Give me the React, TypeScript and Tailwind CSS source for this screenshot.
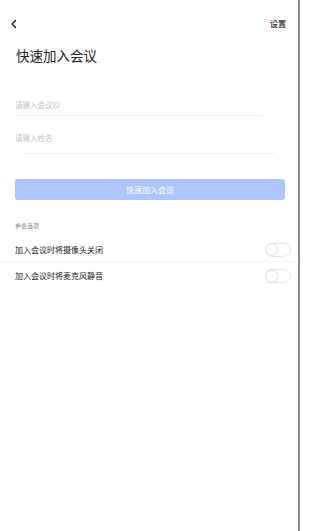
const font = {
  fontFamily:
    '"Noto Sans CJK SC", "Noto Sans", "Liberation Sans", sans-serif',
};

function Toggle() {
  return (
    <div className="w-[26px] h-[14px] rounded-full border border-[#e6e6e6] bg-white flex items-center">
      <div className="w-[13px] h-[13px] rounded-full border border-[#dcdcdc] bg-white -ml-px" />
    </div>
  );
}

export default function App() {
  return (
    <div
      className="w-[300px] h-[531px] bg-white border-r-2 border-[#8a8a8a] overflow-hidden"
      style={font}
    >
      <div className="flex items-center justify-between pl-[10px] pr-[12px] pt-[17px] h-[30px]">
        <svg width="8" height="10" viewBox="0 0 8 10" fill="none">
          <path
            d="M5.5 1.5 L2 5 L5.5 8.5"
            stroke="#111"
            strokeWidth="1.4"
            strokeLinecap="round"
            strokeLinejoin="round"
          />
        </svg>
        <span className="text-[8px] leading-none font-medium text-[#222]">设置</span>
      </div>

      <h1 className="pl-[16px] mt-[16px] text-[13.5px] leading-[18px] text-[#222]">
        快速加入会议
      </h1>

      <div className="mt-[30px] ml-[15px] w-[247px] h-[22px] border-b border-[#f0f0f0] flex items-center">
        <span className="text-[7.5px] text-[#c4c4c4]">请输入会议ID</span>
      </div>
      <div className="mt-[15px] pl-[15px] text-[7.5px] leading-[14px] text-[#c4c4c4]">
        请输入姓名
      </div>
      <div className="ml-[25px] w-[250px] mt-[8px] border-b border-[#f0f0f0]" />

      <button className="mt-[25px] ml-[15px] w-[270px] h-[21px] rounded-[3px] bg-[#adc5fc] text-white text-[8px] flex items-center justify-center">
        快速加入会议
      </button>

      <div className="mt-[21px] pl-[15px] text-[6px] leading-[10px] text-[#888]">
        参会选项
      </div>

      <div className="mt-[7px] pl-[15px] pr-[7px] h-[24px] flex items-center justify-between border-b border-[#f3f3f3]">
        <span className="text-[8px] text-[#222]">加入会议时将摄像头关闭</span>
        <Toggle />
      </div>
      <div className="pl-[15px] pr-[7px] h-[28px] flex items-center justify-between">
        <span className="text-[8px] text-[#222]">加入会议时将麦克风静音</span>
        <Toggle />
      </div>
    </div>
  );
}
